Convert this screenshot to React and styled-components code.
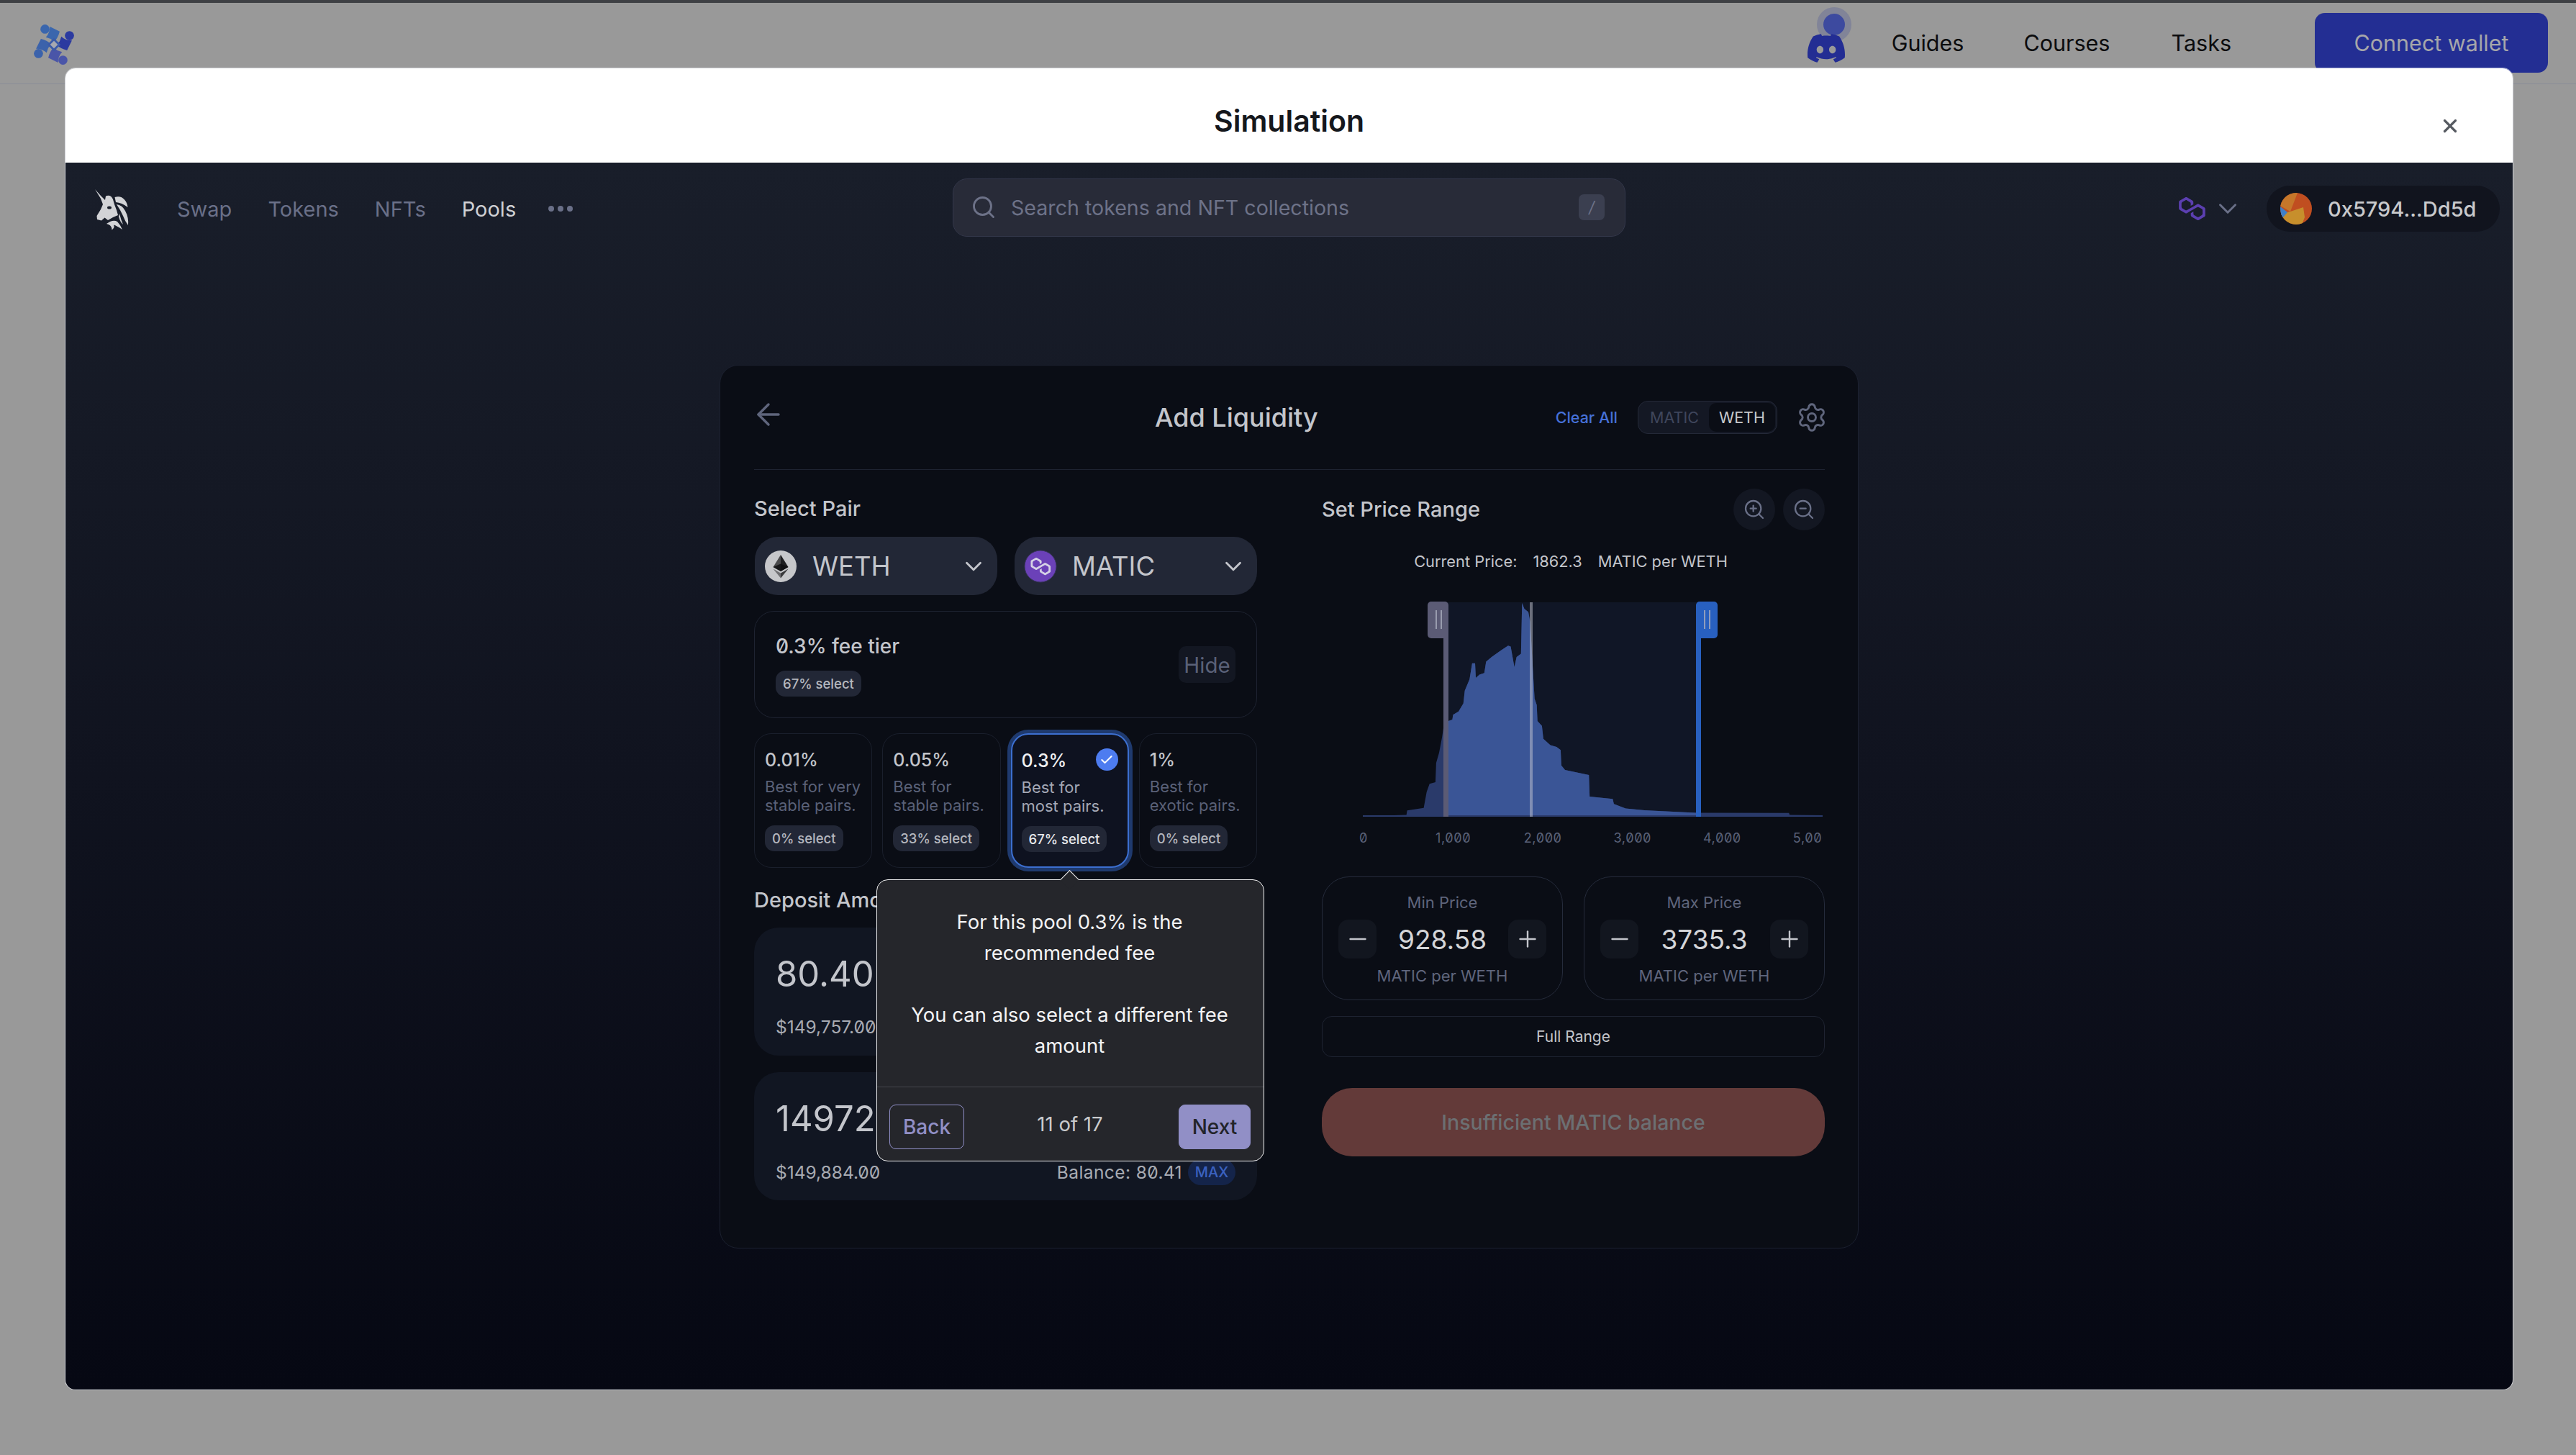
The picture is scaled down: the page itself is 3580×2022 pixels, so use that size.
import React from "react";
import styled, { createGlobalStyle } from "styled-components";
import { ArrowLeft, Settings, Search, ZoomIn, ZoomOut, ChevronDown, Check, Minus, Plus, X } from "lucide-react";
import { SiDiscord } from "react-icons/si";

const Global = createGlobalStyle`
  * { box-sizing: border-box; }
  html, body { margin: 0; padding: 0; background: #999; }
  body { font-family: Inter, "Noto Sans", sans-serif; }
`;

const Page = styled.div`
  position: relative;
  width: 3580px;
  height: 2022px;
  background: #999;
  overflow: hidden;
`;
const TopNav = styled.header`
  height: 117px;
  border-top: 4px solid #3e4044;
  border-bottom: 1px solid #8a8d97;
  display: flex;
  align-items: flex-start;
  padding: 14px 39px 0 41px;
`;
const NavLinks = styled.nav`
  margin-left: auto;
  display: flex;
  align-items: center;
  height: 83px;
`;
const Beacon = styled.div`
  position: relative;
  width: 52px;
  height: 40px;
  margin: 0 65px 0 0;
  top: 1px;
  color: #232d93;
`;
const Pulse = styled.span`
  position: absolute;
  left: 13px;
  top: -31px;
  width: 48px;
  height: 48px;
  border-radius: 50%;
  background: rgba(60, 70, 150, 0.25);
  &::after {
    content: "";
    position: absolute;
    inset: 9px;
    border-radius: 50%;
    background: #3d4a9f;
  }
`;
const DiscordMark = styled(SiDiscord)`
  position: relative;
  display: block;
`;
const TopLink = styled.a`
  font-size: 30.5px;
  color: #0c0c0e;
  margin-right: ${(p) => p.$gap}px;
`;
const ConnectButton = styled.button`
  width: 324px;
  height: 83px;
  border: 0;
  border-radius: 14px;
  background: #232e93;
  color: #a6a6aa;
  font: 400 30.5px Inter, sans-serif;
`;

const Modal = styled.section`
  position: absolute;
  left: 91px;
  top: 95px;
  width: 3401px;
  height: 1836px;
  border-radius: 14px;
  overflow: hidden;
  display: flex;
  flex-direction: column;
  box-shadow: 0 0 0 1px rgba(230, 232, 240, 0.7);
`;
const ModalHead = styled.div`
  height: 131px;
  background: #fff;
  display: flex;
  align-items: center;
  justify-content: center;
  position: relative;
  flex: none;
`;
const ModalTitle = styled.h2`
  margin: 14px 0 0;
  font-size: 41px;
  font-weight: 600;
  color: #15171c;
`;
const CloseIcon = styled(X)`
  position: absolute;
  right: 72px;
  top: 65px;
  color: #565a61;
`;
const ModalBody = styled.div`
  flex: 1;
  background: linear-gradient(180deg, #191e2a 0%, #10131f 50%, #060813 100%);
  position: relative;
`;

const AppBar = styled.div`
  height: 128px;
  display: grid;
  grid-template-columns: 1fr 935px 1fr;
  align-items: center;
  padding: 0 18px;
`;
const AppLeft = styled.div`
  display: flex;
  align-items: center;
  color: #d2d3d6;
`;
const AppLink = styled.span`
  font-size: 29px;
  color: ${(p) => (p.$active ? "#cfd0d4" : "#6a7088")};
  margin-right: ${(p) => p.$gap}px;
`;
const Dots = styled.span`
  display: flex;
  gap: 5px;
  span {
    width: 8px;
    height: 8px;
    border-radius: 50%;
    background: #6a7088;
  }
`;
const SearchBox = styled.div`
  height: 81px;
  position: relative;
  top: -2px;
  border: 1px solid #33374a;
  border-radius: 20px;
  background: #282b38;
  display: flex;
  align-items: center;
  padding: 0 28px 0 24px;
  color: #6d7288;
  gap: 20px;
  font-size: 28.6px;
`;
const SlashKey = styled.span`
  margin-left: auto;
  width: 36px;
  height: 36px;
  border-radius: 7px;
  background: #3b3f50;
  display: flex;
  align-items: center;
  justify-content: center;
  font-size: 22px;
  font-style: italic;
  color: #6d7288;
`;
const AppRight = styled.div`
  display: flex;
  align-items: center;
  justify-content: flex-end;
`;
const WalletPill = styled.div`
  margin-left: 33px;
  width: 324px;
  height: 64px;
  border-radius: 32px;
  background: #11141e;
  display: flex;
  align-items: center;
  padding-left: 19px;
  gap: 22px;
  font-size: 29px;
  font-weight: 500;
  color: #c8c9cc;
`;

const Card = styled.div`
  position: relative;
  width: 1583px;
  height: 1228px;
  margin: 153px auto 0;
  padding: 0 46px 0 47px;
  background: #0a0d15;
  border: 1px solid #1c2130;
  border-radius: 26px;
`;
const CardHead = styled.div`
  height: 145px;
  border-bottom: 1px solid #1e2331;
  display: flex;
  align-items: center;
`;
const BackIcon = styled(ArrowLeft)`
  color: #5f657c;
  margin: -9px 0 0 -4px;
`;
const CardTitle = styled.h3`
  margin: 0 0 0 513px;
  font-size: 36px;
  font-weight: 500;
  color: #c3c5cb;
`;
const HeadRight = styled.div`
  margin-left: auto;
  display: flex;
  align-items: center;
`;
const ClearAll = styled.span`
  font-size: 21.5px;
  font-weight: 500;
  color: #4570d8;
  margin-right: 28px;
`;
const Toggle = styled.div`
  width: 194px;
  height: 46px;
  border: 1px solid #242938;
  border-radius: 14px;
  background: #141824;
  display: flex;
  align-items: center;
  padding: 2px;
  font-size: 21.5px;
  margin-right: 26px;
`;
const ToggleSeg = styled.span`
  flex: ${(p) => (p.$on ? "0 0 92px" : "1")};
  height: 100%;
  border-radius: 10px;
  background: ${(p) => (p.$on ? "#0a0d15" : "transparent")};
  color: ${(p) => (p.$on ? "#c8c9cc" : "#3f465c")};
  display: flex;
  align-items: center;
  justify-content: center;
`;
const Gear = styled(Settings)`
  color: #5f657c;
  margin-right: -4px;
`;

const Columns = styled.div`
  display: grid;
  grid-template-columns: 699px 699px;
  column-gap: 90px;
`;
const Column = styled.div`
  display: flex;
  flex-direction: column;
`;
const Label = styled.div`
  font-size: 29px;
  font-weight: 500;
  line-height: 36px;
  color: #c3c5cb;
`;
const SelectRow = styled.div`
  margin-top: 21px;
  display: grid;
  grid-template-columns: 337px 337px;
  column-gap: 24px;
  padding-left: 1px;
`;
const TokenSelect = styled.div`
  height: 81px;
  border-radius: 32px;
  background: #222736;
  display: flex;
  align-items: center;
  padding: 0 14px 0 13px;
  gap: 21px;
  font-size: 36.5px;
  color: #c3c5cb;
`;
const TokenChevron = styled(ChevronDown)`
  margin-left: auto;
  color: #c3c5cb;
`;
const FeeBox = styled.div`
  margin-top: 22px;
  height: 149px;
  border: 1px solid #1e2331;
  border-radius: 28px;
  padding: 30px 29px;
  display: flex;
  align-items: flex-start;
  justify-content: space-between;
`;
const FeeTitle = styled.div`
  font-size: 28px;
  font-weight: 500;
  line-height: 36px;
  color: #c3c5cb;
  font-feature-settings: "zero";
`;
const Badge = styled.span`
  display: inline-block;
  height: 36px;
  line-height: 36px;
  padding: 0 10px;
  border-radius: 13px;
  background: #222736;
  font-size: 18.5px;
  font-weight: 500;
  color: ${(p) => (p.$on ? "#e8e9ec" : "#b5b7be")};
`;
const FeeBadgeWrap = styled.div`
  margin-top: 16px;
`;
const HideButton = styled.span`
  margin-top: 18px;
  width: 79px;
  height: 51px;
  border-radius: 10px;
  background: #131722;
  display: flex;
  align-items: center;
  justify-content: center;
  font-size: 29.5px;
  color: #5a6178;
`;
const FeeGrid = styled.div`
  margin-top: 21px;
  display: grid;
  grid-template-columns: repeat(4, 1fr);
  column-gap: 14px;
`;
const FeeOption = styled.div`
  position: relative;
  height: 187px;
  padding: 19px ${(p) => (p.$on ? 13 : 14)}px 0;
  border-radius: 24px;
  border: ${(p) => (p.$on ? "2px solid #3c6fd0" : "1px solid #1a1f2c")};
  background: ${(p) => (p.$on ? "#0e1220" : "transparent")};
  box-shadow: ${(p) => (p.$on ? "0 0 0 5px #1f3a6e" : "none")};
`;
const FeePct = styled.div`
  font-size: 25px;
  font-weight: 500;
  line-height: 34px;
  color: ${(p) => (p.$on ? "#f0f1f3" : "#c3c5cb")};
`;
const FeeDesc = styled.div`
  margin-top: 7px;
  font-size: 22px;
  line-height: 26px;
  color: ${(p) => (p.$on ? "#a4a8b6" : "#5a6178")};
  white-space: pre;
`;
const OptionBadge = styled.div`
  margin-top: 15px;
`;
const CheckDot = styled.span`
  position: absolute;
  right: 13px;
  top: 19px;
  width: 31px;
  height: 31px;
  border-radius: 50%;
  background: #4d7cf0;
  color: #fff;
  display: flex;
  align-items: center;
  justify-content: center;
`;
const DepositLabel = styled(Label)`
  margin-top: 27px;
`;
const DepositBox = styled.div`
  margin-top: ${(p) => p.$top}px;
  height: 178px;
  border-radius: 34px;
  background: #111622;
  padding: ${(p) => p.$pad}px 30px 0;
  overflow: hidden;
`;
const DepositValue = styled.div`
  font-size: 49px;
  line-height: 60px;
  color: #c3c5cb;
`;
const DepositFoot = styled.div`
  margin-top: ${(p) => p.$gap}px;
  display: flex;
  align-items: center;
  justify-content: space-between;
  font-size: 24.5px;
  line-height: 36px;
  color: #a8abb3;
  font-feature-settings: "zero";
  white-space: nowrap;
`;
const BalanceWrap = styled.span`
  display: flex;
  align-items: center;
  gap: 8px;
  letter-spacing: 0.4px;
`;
const MaxPill = styled.span`
  width: 66px;
  height: 36px;
  border-radius: 18px;
  background: #14244a;
  color: #3b62c0;
  font-size: 20px;
  font-weight: 500;
  letter-spacing: 0;
  display: flex;
  align-items: center;
  justify-content: center;
`;

const PriceHead = styled.div`
  height: 57px;
  margin-top: 26px;
  display: flex;
  align-items: center;
  gap: 11px;
`;
const PriceLabel = styled(Label)`
  margin-right: auto;
`;
const ZoomCircle = styled.span`
  width: 58px;
  height: 58px;
  border-radius: 50%;
  background: #131722;
  color: #6a7088;
  display: flex;
  align-items: center;
  justify-content: center;
`;
const CurrentPrice = styled.div`
  margin-top: 29px;
  height: 30px;
  padding-right: 7px;
  display: flex;
  justify-content: center;
  gap: 22px;
  font-size: 21.8px;
  line-height: 30px;
  color: #c3c5cb;
`;
const ChartFrame = styled.svg`
  display: block;
  margin: 35px 0 0 48px;
`;
const AxisText = styled.text`
  font-family: Inter, sans-serif;
  font-size: 18px;
  fill: #5a6178;
  letter-spacing: 0.6px;
  font-feature-settings: "zero";
`;
const RangeRow = styled.div`
  margin-top: 36px;
  display: grid;
  grid-template-columns: 335px 335px;
  column-gap: 29px;
`;
const RangeCard = styled.div`
  height: 172px;
  border: 1px solid #252b3b;
  border-radius: 38px;
  padding: 19px 22px 0;
  display: flex;
  flex-direction: column;
  align-items: center;
  font-size: 22px;
  color: #5f657c;
`;
const RangeLine = styled.div`
  line-height: 32px;
`;
const Stepper = styled.div`
  margin: 8px 0 8px;
  width: 100%;
  display: flex;
  align-items: center;
  justify-content: space-between;
`;
const StepButton = styled.span`
  width: 53px;
  height: 54px;
  border-radius: 14px;
  background: #12161f;
  color: #c3c5cb;
  display: flex;
  align-items: center;
  justify-content: center;
`;
const RangeValue = styled.span`
  font-size: 37px;
  color: #d4d5d8;
`;
const FullRange = styled.div`
  margin-top: 22px;
  height: 57px;
  border: 1px solid #1e2331;
  border-radius: 14px;
  display: flex;
  align-items: center;
  justify-content: center;
  font-size: 21px;
  color: #c3c5cb;
`;
const SubmitButton = styled.div`
  margin-top: 43px;
  height: 95px;
  border-radius: 42px;
  background: #633a39;
  display: flex;
  align-items: center;
  justify-content: center;
  font-size: 28.5px;
  font-weight: 500;
  color: #6c6f72;
`;

const Tooltip = styled.div`
  position: absolute;
  left: 217px;
  top: 714px;
  width: 539px;
  height: 392px;
  background: #25262b;
  border: 1px solid #f1f1f2;
  border-radius: 16px;
  color: #f4f4f5;
  display: flex;
  flex-direction: column;
  &::before {
    content: "";
    position: absolute;
    left: 258px;
    top: -10px;
    width: 18px;
    height: 18px;
    background: #25262b;
    border-left: 1px solid #f1f1f2;
    border-top: 1px solid #f1f1f2;
    transform: rotate(45deg);
  }
`;
const TipText = styled.div`
  height: 288px;
  padding: 37px 32px 0 30px;
  text-align: center;
  font-size: 27.5px;
  line-height: 43px;
  border-bottom: 1px solid #44454b;
  p { margin: 0 0 43px; }
`;
const TipFoot = styled.div`
  flex: 1;
  display: grid;
  grid-template-columns: 1fr auto 1fr;
  align-items: center;
  padding: 0 18px 0 17px;
`;
const TipButton = styled.button`
  justify-self: ${(p) => (p.$primary ? "end" : "start")};
  width: ${(p) => (p.$primary ? 100 : 104)}px;
  height: 62px;
  margin-top: 7px;
  border-radius: 9px;
  border: 1px solid #8f8ec6;
  background: ${(p) => (p.$primary ? "#918fc6" : "transparent")};
  color: ${(p) => (p.$primary ? "#23242a" : "#918fc6")};
  font: 500 28px Inter, sans-serif;
`;
const TipCount = styled.span`
  font-size: 27.5px;
  color: #c9cacd;
  margin-top: -1px;
`;
const Round = styled.svg`
  display: block;
  flex: none;
`;
const BrandMark = styled(Round)`
  margin: 0 45px 0 12px;
`;
const ClusterMark = styled(Round)`
  margin-top: 10px;
`;
const NetChevron = styled(ChevronDown)`
  margin-left: 10px;
  color: #6a7088;
`;
const SelectPairLabel = styled(Label)`
  margin-top: 36px;
`;

const Unicorn = () => (
  <BrandMark width="80" height="80" viewBox="0 0 80 80" fill="#d2d3d6">
    <path d="M11 13 L19 22 L25 28 L26 22.5 Q33 20 36 27 L38 34 L41 42 L43 49 L36 52 L29 56 L24.5 52.5 L20 56.5 L14 55 L13.5 50 L19 41 L22 34 L19 26 Z" />
    <ellipse cx="31" cy="38.5" rx="3" ry="2" fill="#191e2a" />
    <path d="M38.5 24 Q47 21.5 52 27.5 Q56 32 56.5 38 Q48 31.5 40 31 Z" />
    <path d="M41 34 Q49 35 53 43 Q58 52 57 63 Q52.5 57 50 50 Q46.5 42 41 34 Z" />
    <path d="M45 47 Q47 55 50 62 Q46 59 44 51 Z" />
    <path d="M27 61 Q36 54.5 42 58 Q46 62 49 69 Q41 63.5 37 62.5 Q39 66 34.5 69.5 Q34.5 64 30 62 Z" />
  </BrandMark>
);

const Cluster = () => (
  <ClusterMark width="68" height="68" viewBox="-30 -30 60 60">
    {[
      [0, "#3a66ad"],
      [90, "#2b3aa0"],
      [180, "#4a55a8"],
      [270, "#3b62ab"],
    ].map(([a, c]) => (
      <g key={a} transform={`rotate(${a})`} fill={c}>
        <circle cx="-11" cy="-19" r="5.6" />
        <path d="M-5 -22 L7 -16 Q5 -8 0 -3 L-4 -7 L-10 -9 Q-5 -14 -5 -22Z" />
      </g>
    ))}
    <rect x="-4.5" y="-4.5" width="9" height="9" transform="rotate(45)" fill="#a6a8b0" stroke="#3a5aa8" strokeWidth="2.4" />
  </ClusterMark>
);

const POLY =
  "M29,10.2c-0.7-0.4-1.6-0.4-2.4,0L21,13.5l-3.8,2.1l-5.5,3.3c-0.7,0.4-1.6,0.4-2.4,0L5,16.3c-0.7-0.4-1.2-1.2-1.2-2.1v-5c0-0.8,0.4-1.6,1.2-2.1l4.3-2.5c0.7-0.4,1.6-0.4,2.4,0L16,7.2c0.7,0.4,1.2,1.2,1.2,2.1v3.3l3.8-2.2V7c0-0.8-0.4-1.6-1.2-2.1l-8-4.7c-0.7-0.4-1.6-0.4-2.4,0L1.2,5C0.4,5.4,0,6.2,0,7v9.4c0,0.8,0.4,1.6,1.2,2.1l8.1,4.7c0.7,0.4,1.6,0.4,2.4,0l5.5-3.2l3.8-2.2l5.5-3.2c0.7-0.4,1.6-0.4,2.4,0l4.3,2.5c0.7,0.4,1.2,1.2,1.2,2.1v5c0,0.8-0.4,1.6-1.2,2.1L29,28.8c-0.7,0.4-1.6,0.4-2.4,0l-4.3-2.5c-0.7-0.4-1.2-1.2-1.2-2.1V21l-3.8,2.2v3.3c0,0.8,0.4,1.6,1.2,2.1l8.1,4.7c0.7,0.4,1.6,0.4,2.4,0l8.1-4.7c0.7-0.4,1.2-1.2,1.2-2.1V17c0-0.8-0.4-1.6-1.2-2.1L29,10.2z";

const PolygonMark = () => (
  <Round width="37" height="32" viewBox="0 0 38.4 33.5">
    <path d={POLY} fill="#5b3fb0" />
  </Round>
);

const MaticCoin = () => (
  <Round width="46" height="46" viewBox="0 0 46 46">
    <circle cx="23" cy="23" r="22" fill="#6b41b8" stroke="#3a3560" />
    <g transform="translate(9.5 11) scale(0.72)">
      <path d={POLY} fill="#d5d1e6" />
    </g>
  </Round>
);

const EthCoin = () => (
  <Round width="46" height="46" viewBox="0 0 46 46">
    <circle cx="23" cy="23" r="22" fill="#c6c7ca" />
    <path d="M23 7 L12.5 24 L23 30 Z" fill="#4a4a4c" />
    <path d="M23 7 L33.5 24 L23 30 Z" fill="#1e1e20" />
    <path d="M12.5 24 L23 19.5 L33.5 24 L23 30Z" fill="#0e0e10" opacity="0.85" />
    <path d="M12.5 26.5 L23 32.5 L23 39.5 Z" fill="#6f6f72" />
    <path d="M33.5 26.5 L23 32.5 L23 39.5 Z" fill="#3a3a3c" />
  </Round>
);

const Identicon = () => (
  <Round width="44" height="44" viewBox="0 0 44 44">
    <defs>
      <clipPath id="idc"><circle cx="22" cy="22" r="22" /></clipPath>
    </defs>
    <g clipPath="url(#idc)">
      <rect width="44" height="44" fill="#c04e20" />
      <path d="M0 0 H24 L14 26 L0 18Z" fill="#c6772a" />
      <path d="M14 26 L32 20 L34 34 L30 44 H0 L0 30Z" fill="#c78f2c" />
      <path d="M0 19 L10 27 L4 34 L0 34Z" fill="#3f80c8" />
    </g>
  </Round>
);

const HIST = [
  [184,1376],[303,1372],[305,1358],[350,1350],[358,1300],[366,1275],[382,1270],[384,1210],[392,1178],[400,1130],[404,1100],[417,1098],[417,1080],[428,1075],[430,1060],[445,1050],[458,1025],[462,985],[475,950],[482,900],[490,900],[492,945],[502,935],[515,930],[520,895],[535,880],[560,860],[580,845],[587,848],[597,912],[603,880],[615,870],[618,712],[624,730],[635,740],[640,770],[648,930],[652,1010],[658,1030],[660,1080],[672,1095],[676,1135],[695,1155],[712,1160],[723,1170],[725,1218],[735,1232],[800,1248],[802,1315],[865,1322],[868,1338],[900,1352],[960,1358],[1090,1365],[1345,1366],[1347,1372],[1435,1373],[1435,1376],
];
const histPoints = HIST.map(([x, y]) => `${(1800 + x / 1.96 - 1885).toFixed(1)},${(520 + y / 2.24 - 830).toFixed(1)}`).join(" ");

const Grip = ({ x }) => (
  <>
    <rect x={x} y="18" width="2" height="26" fill="#a9adbd" opacity="0.8" />
    <rect x={x + 7} y="18" width="2" height="26" fill="#a9adbd" opacity="0.8" />
  </>
);

const Chart = () => (
  <ChartFrame width="648" height="352" viewBox="0 0 648 352">
    <defs>
      <clipPath id="inRange"><rect x="124" y="0" width="352" height="310" /></clipPath>
    </defs>
    <rect x="124" y="7" width="352" height="297" fill="#101626" />
    <polygon points={histPoints} fill="#2a3a6a" />
    <polygon points={histPoints} fill="#3a5596" clipPath="url(#inRange)" />
    <rect x="9" y="303" width="639" height="2" fill="#2a3a6a" />
    <rect x="241" y="7" width="4" height="298" fill="#c6c8d2" opacity="0.5" />
    <rect x="121" y="30" width="7" height="275" fill="#5b5b75" />
    <rect x="99" y="6" width="29" height="51" rx="5" fill="#5b5b75" />
    <Grip x={110} />
    <rect x="472" y="30" width="7" height="275" fill="#2860c0" />
    <rect x="472" y="6" width="30" height="51" rx="5" fill="#2860c0" />
    <Grip x={483} />
    {["0", "1,000", "2,000", "3,000", "4,000", "5,000"].map((t, i) => (
      <AxisText key={t} x={10 + i * 124.6} y="341" textAnchor="middle">{t}</AxisText>
    ))}
  </ChartFrame>
);

const fees = [
  { pct: "0.01%", desc: "Best for very\nstable pairs.", sel: "0% select" },
  { pct: "0.05%", desc: "Best for\nstable pairs.", sel: "33% select" },
  { pct: "0.3%", desc: "Best for\nmost pairs.", sel: "67% select", on: true },
  { pct: "1%", desc: "Best for\nexotic pairs.", sel: "0% select" },
];

const RangeBox = ({ label, value }) => (
  <RangeCard>
    <RangeLine>{label}</RangeLine>
    <Stepper>
      <StepButton><Minus size={36} strokeWidth={1.6} /></StepButton>
      <RangeValue>{value}</RangeValue>
      <StepButton><Plus size={36} strokeWidth={1.6} /></StepButton>
    </Stepper>
    <RangeLine>MATIC per WETH</RangeLine>
  </RangeCard>
);

export default function App() {
  return (
    <Page>
      <Global />
      <TopNav>
        <Cluster />
        <NavLinks>
          <Beacon>
            <Pulse />
            <DiscordMark size={52} />
          </Beacon>
          <TopLink $gap={83}>Guides</TopLink>
          <TopLink $gap={85}>Courses</TopLink>
          <TopLink $gap={116}>Tasks</TopLink>
          <ConnectButton>Connect wallet</ConnectButton>
        </NavLinks>
      </TopNav>

      <Modal>
        <ModalHead>
          <ModalTitle>Simulation</ModalTitle>
          <CloseIcon size={30} strokeWidth={2.6} />
        </ModalHead>
        <ModalBody>
          <AppBar>
            <AppLeft>
              <Unicorn />
              <AppLink $gap={50}>Swap</AppLink>
              <AppLink $gap={50}>Tokens</AppLink>
              <AppLink $gap={50}>NFTs</AppLink>
              <AppLink $active $gap={45}>Pools</AppLink>
              <Dots><span /><span /><span /></Dots>
            </AppLeft>
            <SearchBox>
              <Search size={36} strokeWidth={1.9} />
              Search tokens and NFT collections
              <SlashKey>/</SlashKey>
            </SearchBox>
            <AppRight>
              <PolygonMark />
              <NetChevron size={42} strokeWidth={1.7} />
              <WalletPill>
                <Identicon />
                0x5794...Dd5d
              </WalletPill>
            </AppRight>
          </AppBar>

          <Card>
            <CardHead>
              <BackIcon size={48} strokeWidth={1.7} />
              <CardTitle>Add Liquidity</CardTitle>
              <HeadRight>
                <ClearAll>Clear All</ClearAll>
                <Toggle>
                  <ToggleSeg>MATIC</ToggleSeg>
                  <ToggleSeg $on>WETH</ToggleSeg>
                </Toggle>
                <Gear size={44} strokeWidth={1.6} />
              </HeadRight>
            </CardHead>
            <Columns>
              <Column>
                <SelectPairLabel>Select Pair</SelectPairLabel>
                <SelectRow>
                  <TokenSelect>
                    <EthCoin />
                    WETH
                    <TokenChevron size={38} strokeWidth={1.8} />
                  </TokenSelect>
                  <TokenSelect>
                    <MaticCoin />
                    MATIC
                    <TokenChevron size={38} strokeWidth={1.8} />
                  </TokenSelect>
                </SelectRow>
                <FeeBox>
                  <div>
                    <FeeTitle>0.3% fee tier</FeeTitle>
                    <FeeBadgeWrap><Badge>67% select</Badge></FeeBadgeWrap>
                  </div>
                  <HideButton>Hide</HideButton>
                </FeeBox>
                <FeeGrid>
                  {fees.map((f) => (
                    <FeeOption key={f.pct} $on={f.on}>
                      <FeePct $on={f.on}>{f.pct}</FeePct>
                      <FeeDesc $on={f.on}>{f.desc}</FeeDesc>
                      <OptionBadge><Badge $on={f.on}>{f.sel}</Badge></OptionBadge>
                      {f.on && <CheckDot><Check size={20} strokeWidth={2.4} /></CheckDot>}
                    </FeeOption>
                  ))}
                </FeeGrid>
                <DepositLabel>Deposit Amount</DepositLabel>
                <DepositBox $top={20} $pad={35}>
                  <DepositValue>80.40</DepositValue>
                  <DepositFoot $gap={25}><span>$149,757.00</span></DepositFoot>
                </DepositBox>
                <DepositBox $top={23} $pad={35}>
                  <DepositValue>149720</DepositValue>
                  <DepositFoot $gap={26}>
                    <span>$149,884.00</span>
                    <BalanceWrap>Balance: 80.41 <MaxPill>MAX</MaxPill></BalanceWrap>
                  </DepositFoot>
                </DepositBox>
              </Column>
              <Column>
                <PriceHead>
                  <PriceLabel>Set Price Range</PriceLabel>
                  <ZoomCircle><ZoomIn size={32} strokeWidth={1.7} /></ZoomCircle>
                  <ZoomCircle><ZoomOut size={32} strokeWidth={1.7} /></ZoomCircle>
                </PriceHead>
                <CurrentPrice>
                  <span>Current Price:</span>
                  <span>1862.3</span>
                  <span>MATIC per WETH</span>
                </CurrentPrice>
                <Chart />
                <RangeRow>
                  <RangeBox label="Min Price" value="928.58" />
                  <RangeBox label="Max Price" value="3735.3" />
                </RangeRow>
                <FullRange>Full Range</FullRange>
                <SubmitButton>Insufficient MATIC balance</SubmitButton>
              </Column>
            </Columns>
            <Tooltip>
              <TipText>
                <p>For this pool 0.3% is the recommended fee</p>
                <p>You can also select a different fee amount</p>
              </TipText>
              <TipFoot>
                <TipButton>Back</TipButton>
                <TipCount>11 of 17</TipCount>
                <TipButton $primary>Next</TipButton>
              </TipFoot>
            </Tooltip>
          </Card>
        </ModalBody>
      </Modal>
    </Page>
  );
}
